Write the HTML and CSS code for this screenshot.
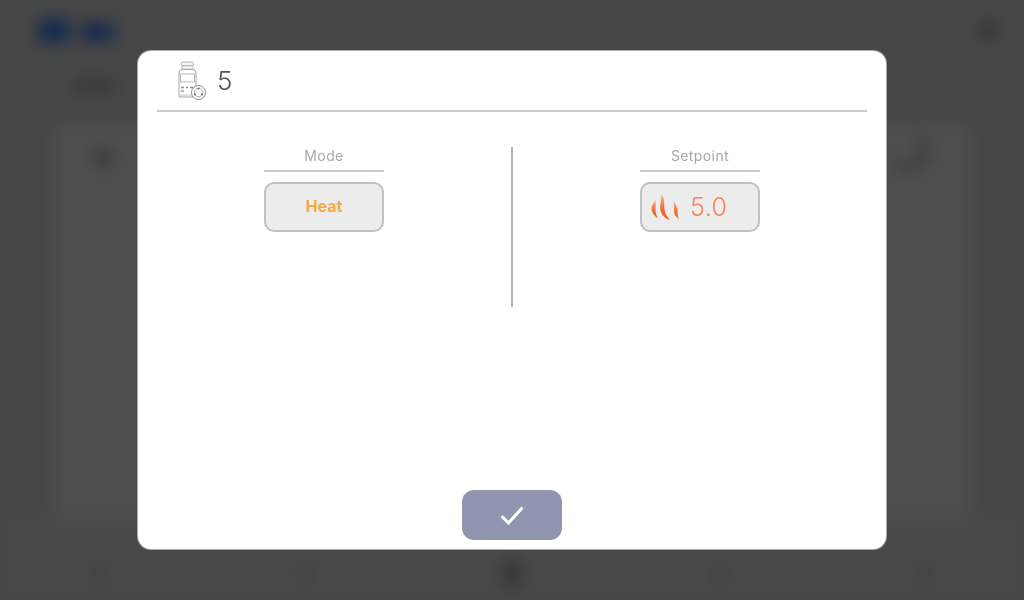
FILE: index.html

```html
<!DOCTYPE html>
<html lang="en">
<head>
<meta charset="UTF-8" />
<title>Thermostat 5</title>
<link rel="stylesheet" href="styles.css">
</head>
<body>

<!-- page behind the dialog, blurred out -->
<div class="backdrop">
  <div class="top-bar">
    <div class="logo">
      <span class="logo-a"></span>
      <span class="logo-b"></span>
    </div>
    <span class="top-icon"></span>
  </div>
  <div class="sub-bar">
    <span class="sub-text"></span>
    <span class="sub-box"></span>
  </div>
  <div class="card">
    <div class="card-row">
      <span class="card-dot"></span>
      <span class="card-arc"></span>
    </div>
  </div>
  <div class="bottom-nav">
    <span class="nav-item"></span>
    <span class="nav-item"></span>
    <span class="nav-item nav-main"></span>
    <span class="nav-item"></span>
    <span class="nav-item"></span>
  </div>
</div>

<div class="dialog">
  <div class="dialog-head">
    <svg class="valve-icon" width="30" height="40" viewBox="0 0 30 40" fill="none">
      <rect x="5.5" y="1" width="12" height="3.5" rx="1.5" fill="#f4f4f4" stroke="#b5b5b5" />
      <rect x="6" y="5" width="11" height="3" fill="#fff" stroke="#c4c4c4" />
      <path d="M3 12 Q3 8.5 6.5 8.5 H16.5 Q20 8.5 20 12 V36 H3 Z" fill="#fff" stroke="#a6a6a6" />
      <rect x="4.5" y="13" width="14" height="8" fill="#fff" stroke="#b8b8b8" />
      <path d="M5 26.5 H8 M10 26.5 H12 M14 26.5 H17" stroke="#8a8a8a" stroke-width="1.4" />
      <path d="M5 30 H8" stroke="#999" stroke-width="1.4" />
      <path d="M4 34 H18" stroke="#c4c4c4" />
      <circle cx="22.5" cy="31.5" r="7" fill="#fff" stroke="#8c8c8c" />
      <circle cx="22.5" cy="31.5" r="4.2" stroke="#b0b0b0" />
      <circle cx="22.5" cy="27.5" r="1.1" fill="#777" />
      <circle cx="19" cy="33.5" r="1.1" fill="#777" />
      <circle cx="26" cy="33.5" r="1.1" fill="#777" />
    </svg>
    <span class="dialog-title">5</span>
  </div>

  <div class="dialog-body">
    <div class="setting">
      <div class="setting-label">Mode</div>
      <div class="setting-btn mode-value">Heat</div>
    </div>
    <div class="setting">
      <div class="setting-label">Setpoint</div>
      <div class="setting-btn setpoint-value">
        <svg class="flame-icon" width="30" height="28" viewBox="0 0 30 28">
          <defs>
            <linearGradient id="flame" x1="0" y1="0" x2="0" y2="1">
              <stop offset="0" stop-color="#f8b08c" />
              <stop offset="0.6" stop-color="#f06a35" />
              <stop offset="1" stop-color="#ec5a24" />
            </linearGradient>
          </defs>
          <path fill="url(#flame)" d="M5 7 C6.5 11 5.5 13 5.5 16 C5.5 19 6 22 8 25 C4 23 1.5 19 1.5 15.5 C1.5 12 4 10.5 5 7 Z" />
          <path fill="url(#flame)" d="M11 1 C14.5 5 14.5 9 14.2 13 C14 18 16 23 20 27 C13.5 25 10 20 10.2 14 C10.5 9 12 6 11 1 Z" />
          <path fill="url(#flame)" d="M23 8 C26.5 11 27.5 15 27.5 19 C27.5 21.5 27.8 24 29 26 C25.5 24 24 21 24 17 C24 14 24.5 11 23 8 Z" />
        </svg>
        <span>5.0</span>
      </div>
    </div>
  </div>

  <div class="dialog-foot">
    <div class="confirm-btn">
      <svg width="26" height="22" viewBox="0 0 26 22" fill="none">
        <path d="M2.5 12 L9.5 19 L23.5 3.5" stroke="#fff" stroke-width="3" />
      </svg>
    </div>
  </div>
</div>

</body>
</html>
```

FILE: styles.css

```css
html, body {
  margin: 0;
  height: 100%;
  overflow: hidden;
  background: #464646;
  font-family: "Inter", "Open Sans", sans-serif;
}

/* blurred page */
.backdrop {
  width: 1024px;
  height: 600px;
  display: flex;
  flex-direction: column;
  background: #464646;
  filter: blur(8px);
}
.top-bar {
  height: 68px;
  box-sizing: border-box;
  padding: 0 26px 6px 39px;
  display: flex;
  align-items: center;
  justify-content: space-between;
}
.logo {
  display: flex;
  gap: 12px;
}
.logo-a {
  width: 30px;
  height: 22px;
  background: #0f2850;
}
.logo-b {
  width: 40px;
  height: 18px;
  margin-top: 3px;
  background: linear-gradient(to right, #14284c 55%, #3c4350);
}
.top-icon {
  width: 20px;
  height: 20px;
  border-radius: 50%;
  background: #363636;
}
.sub-bar {
  height: 52px;
  box-sizing: border-box;
  padding: 0 62px 16px 74px;
  display: flex;
  align-items: center;
  justify-content: space-between;
}
.sub-text {
  width: 40px;
  height: 10px;
  background: #343434;
}
.sub-box {
  width: 22px;
  height: 26px;
  margin-top: 8px;
  border: 2px solid #4d4d4d;
}
.card {
  height: 392px;
  margin: 4px 54px 0;
  background: #4e4e4e;
}
.card-row {
  padding: 6px 42px 0 40px;
  display: flex;
  justify-content: space-between;
}
.card-dot {
  width: 18px;
  height: 18px;
  margin-top: 19px;
  border-radius: 50%;
  background: #383838;
}
.card-arc {
  width: 34px;
  height: 34px;
  border-right: 5px solid #303030;
  border-bottom: 5px solid #303030;
  border-radius: 50%;
}
.bottom-nav {
  flex: 1;
  padding: 30px 92px 0;
  display: flex;
  justify-content: space-between;
  align-items: center;
  background: #494949;
}
.nav-item {
  width: 14px;
  height: 18px;
  background: #404040;
}
.nav-main {
  width: 18px;
  height: 28px;
  background: #363636;
}

/* dialog */
.dialog {
  position: fixed;
  top: 51px;
  left: 138px;
  width: 748px;
  height: 498px;
  display: flex;
  flex-direction: column;
  background: #fff;
  border-radius: 13px;
  box-shadow: 0 0 0 1px #a8a8a8;
}
.dialog-head {
  height: 59px;
  margin: 0 19px;
  padding-left: 19px;
  display: flex;
  align-items: center;
  gap: 11px;
  border-bottom: 2px solid #c9c9c9;
}
.valve-icon {
  margin-top: 1px;
}
.dialog-title {
  font-size: 26px;
  font-weight: 300;
  color: #555;
}
.dialog-body {
  height: 160px;
  margin-top: 35px;
  display: flex;
  gap: 4px;
  background: linear-gradient(#b5b5b5, #b5b5b5) center / 2px 100% no-repeat;
}
.setting {
  flex: 1;
  display: flex;
  flex-direction: column;
  align-items: center;
}
.setting-label {
  width: 120px;
  height: 25px;
  box-sizing: border-box;
  border-bottom: 2px solid #c9c9c9;
  text-align: center;
  font-size: 14px;
  line-height: 18px;
  letter-spacing: 0.4px;
  color: #a8a8a8;
}
.setting-btn {
  width: 120px;
  height: 50px;
  margin-top: 10px;
  box-sizing: border-box;
  display: flex;
  align-items: center;
  justify-content: center;
  background: #ececec;
  border: 2px solid #c0c0c0;
  border-radius: 10px;
}
.mode-value {
  padding-bottom: 2px;
  font-size: 16px;
  font-weight: 700;
  color: #f5a941;
}
.setpoint-value {
  justify-content: flex-start;
  padding-left: 8px;
  gap: 10px;
  font-size: 25px;
  font-weight: 300;
  letter-spacing: 0.5px;
  color: #f2855c;
}
.dialog-foot {
  margin-top: auto;
  padding-bottom: 9px;
  display: flex;
  justify-content: center;
}
.confirm-btn {
  width: 100px;
  height: 50px;
  display: flex;
  align-items: center;
  justify-content: center;
  background: #9096b0;
  border-radius: 12px;
}
```
